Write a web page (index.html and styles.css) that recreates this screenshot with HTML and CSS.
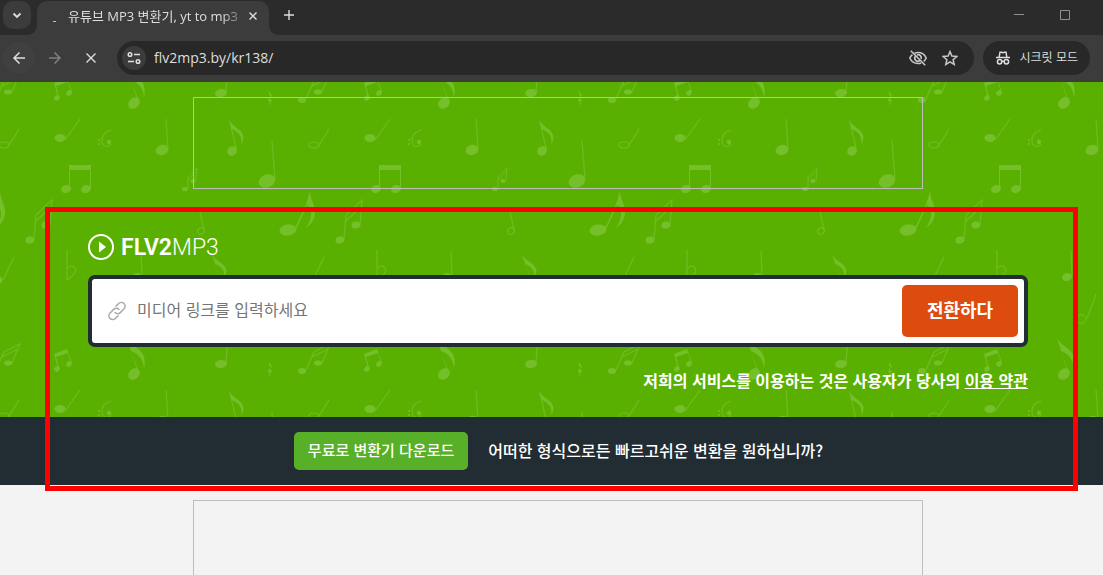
FILE: index.html
```html
<!DOCTYPE html>
<html lang="ko">
<head>
    <meta charset="UTF-8">
    <meta name="viewport" content="width=device-width, initial-scale=1.0">
    <title>유튜브 MP3 변환기, yt to mp3</title>
    <link rel="stylesheet" href="styles.css">
</head>
<body>
    <header class="browser">
        <div class="tab-strip">
            <button class="tab-search" aria-label="탭 검색">
                <svg width="16" height="16" viewBox="0 0 16 16"><path d="M4.5 6.5 8 10l3.5-3.5" stroke-width="1.8"/></svg>
            </button>
            <div class="tab">
                <svg class="spinner" width="16" height="16" viewBox="0 0 16 16"><path d="M8 13.5h3"/></svg>
                <span class="tab-title">유튜브 MP3 변환기, yt to mp3</span>
                <button class="tab-close" aria-label="탭 닫기">
                    <svg width="16" height="16" viewBox="0 0 16 16"><path d="m4.5 4.5 7 7m0-7-7 7" stroke-width="1.4"/></svg>
                </button>
            </div>
            <button class="new-tab" aria-label="새 탭">
                <svg width="16" height="16" viewBox="0 0 16 16"><path d="M8 3v10M3 8h10" stroke-width="1.4"/></svg>
            </button>
            <div class="window-buttons">
                <button aria-label="최소화"><svg width="12" height="12" viewBox="0 0 12 12"><path d="M1 5.5h10"/></svg></button>
                <button aria-label="최대화"><svg width="12" height="12" viewBox="0 0 12 12"><path d="M1.5 1.5h9v9h-9z"/></svg></button>
            </div>
        </div>
        <div class="toolbar">
            <button class="nav-btn nav-back" aria-label="뒤로">
                <svg width="16" height="16" viewBox="0 0 16 16"><path d="M14 8H3m5.5-5.5L3 8l5.5 5.5" stroke-width="1.5"/></svg>
            </button>
            <button class="nav-btn nav-forward" aria-label="앞으로">
                <svg width="16" height="16" viewBox="0 0 16 16"><path d="M2 8h11M7.5 2.5 13 8l-5.5 5.5" stroke-width="1.5"/></svg>
            </button>
            <button class="nav-btn" aria-label="중지">
                <svg width="16" height="16" viewBox="0 0 16 16"><path d="m3.5 3.5 9 9m0-9-9 9" stroke-width="1.4"/></svg>
            </button>
            <div class="address">
                <button class="site-info" aria-label="사이트 정보">
                    <svg width="16" height="16" viewBox="0 0 16 16"><g stroke-width="1.5"><circle cx="4" cy="4.5" r="1.8"/><path d="M8 4.5h6M2 11.5h6"/><circle cx="12" cy="11.5" r="1.8"/></g></svg>
                </button>
                <input class="url" type="text" value="flv2mp3.by/kr138/" aria-label="주소">
                <button class="icon-btn" aria-label="쿠키 차단됨">
                    <svg width="20" height="20" viewBox="0 0 20 20"><g stroke-width="1.6"><path d="M6.5 5.2A9 9 0 0 1 10 4.5c3.7 0 6.7 2.1 8.2 5.5a9 9 0 0 1-2.5 3.4M13.2 14.9a9 9 0 0 1-3.2.6c-3.7 0-6.7-2.1-8.2-5.5A9 9 0 0 1 4.4 6.6"/><path d="M9 6.9A3.2 3.2 0 0 1 13.1 11M11.6 12.8A3.2 3.2 0 0 1 7.2 8.4M2.8 2.8l14.4 14.4"/></g></svg>
                </button>
                <button class="icon-btn" aria-label="북마크">
                    <svg width="16" height="16" viewBox="0 0 16 16"><path d="m8 1.6 1.9 4.5 4.9.4-3.7 3.2 1.1 4.8L8 11.9l-4.2 2.6 1.1-4.8-3.7-3.2 4.9-.4z" stroke-width="1.5"/></svg>
                </button>
            </div>
            <button class="incognito">
                <svg width="16" height="16" viewBox="0 0 16 16"><g stroke-width="1.5"><path d="M1 7.5h14"/><path d="M4.2 7 5 2.2h1.5L8 2.8l1.5-.6H11l.8 4.8"/><circle cx="4.6" cy="11.8" r="2.2"/><circle cx="11.4" cy="11.8" r="2.2"/><path d="M6.8 11.3h2.4"/></g></svg>
                <span>시크릿 모드</span>
            </button>
        </div>
    </header>

    <main class="page">
        <section class="hero">
            <svg class="notes" width="100%" height="100%" aria-hidden="true">
                <defs>
                    <pattern id="notes" x="-32" y="30" width="310" height="271" patternUnits="userSpaceOnUse">
                        <g class="note">
                            <!-- first row -->
                            <g>
                                <ellipse class="line" cx="36" cy="33" rx="5" ry="3"/>
                                <path class="line" d="M40 34Q44 29 51 17"/>
                            </g>
                            <g>
                                <ellipse cx="92" cy="26" rx="5.5" ry="4"/>
                                <path class="line" d="M97 28Q102 21 112 7"/>
                            </g>
                            <g>
                                <path class="line" d="M143 18c-7 2-10 7-9 12 1 5 7 6 9 2"/>
                                <circle cx="141" cy="30" r="2.2"/>
                                <circle cx="131" cy="28" r="1"/><circle cx="131" cy="32" r="1"/>
                            </g>
                            <g>
                                <ellipse cx="194" cy="38" rx="6.5" ry="5" transform="rotate(-18 194 38)"/>
                                <path class="line" d="m198 7 2 30"/>
                            </g>
                            <g>
                                <ellipse cx="264" cy="39" rx="5" ry="4.5" transform="rotate(-35 264 39)"/>
                                <path d="M261 8c4 7 12 9 14 15 1 3 0 7-2 9 2-7-2-12-9-15l5 21h-1z"/>
                            </g>
                            <!-- second row -->
                            <g>
                                <ellipse cx="98" cy="77" rx="5" ry="4" transform="rotate(-18 98 77)"/>
                                <ellipse cx="118" cy="77" rx="5" ry="4" transform="rotate(-18 118 77)"/>
                                <path d="M101 53h22v24h-1V58h-20v19h-1z"/>
                            </g>
                            <g>
                                <ellipse cx="217" cy="77" rx="3" ry="2"/>
                                <ellipse cx="225" cy="69" rx="2.5" ry="2"/>
                                <path class="thin" d="M220 76V65l9-9-1 13m-8-1 9-9"/>
                            </g>
                            <g>
                                <ellipse cx="299" cy="69" rx="8.5" ry="6.5" transform="rotate(-22 299 69)"/>
                                <path class="line" d="m304 29 3 38"/>
                            </g>
                            <g>
                                <ellipse cx="10" cy="118" rx="8.5" ry="5.5" transform="rotate(-8 10 118)"/>
                                <path d="M32 79c0 9 6 14 5 23-1 7-5 11-9 14 5-8 7-15 3-21l-2-2c-3 8-7 16-11 24l-1-1c6-12 12-24 15-37z"/>
                            </g>
                            <!-- third row -->
                            <g>
                                <ellipse cx="62" cy="128" rx="4.5" ry="3.5" transform="rotate(-12 62 128)"/>
                                <ellipse cx="78" cy="113" rx="4.5" ry="3.5" transform="rotate(-12 78 113)"/>
                                <path class="line" d="m66 127 2-24 16-15-2 24M68 109l16-15"/>
                            </g>
                            <g>
                                <ellipse class="line" cx="233" cy="119" rx="3.5" ry="3" transform="rotate(-30 233 119)"/>
                                <path class="line" d="m232 100 4 18"/>
                            </g>
                            <g>
                                <path class="line" d="M99 138v30c7-4 10-9 8-12s-5-3-8 1"/>
                            </g>
                            <g>
                                <ellipse cx="169" cy="165" rx="5" ry="4" transform="rotate(-18 169 165)"/>
                                <path class="line" d="m173 139 1 25"/>
                            </g>
                            <g>
                                <ellipse cx="254" cy="171" rx="4" ry="3.5"/>
                                <path d="M244 143c4 6 12 8 14 14 1 2 0 5-2 8 1-7-3-11-9-13l8 18h-1z"/>
                            </g>
                            <g>
                                <ellipse cx="30" cy="168" rx="4.5" ry="3.5"/>
                                <path class="line" d="m35 168 11-23"/>
                            </g>
                            <g>
                                <ellipse class="line" cx="183" cy="207" rx="5" ry="4" transform="rotate(-8 183 207)"/>
                                <path class="line" d="M189 206q4-9 9-24"/>
                            </g>
                            <!-- fourth row -->
                            <g>
                                <ellipse cx="24" cy="259" rx="4" ry="3"/>
                                <ellipse cx="40" cy="251" rx="4" ry="2.5"/>
                                <path class="line" d="m28 258 8-18 16-8-8 19M34 245l16-8"/>
                            </g>
                            <g>
                                <ellipse cx="89" cy="257" rx="3" ry="2.5" transform="rotate(-45 89 257)"/>
                                <ellipse cx="101" cy="252" rx="3" ry="2.5" transform="rotate(-45 101 252)"/>
                                <path d="m86 242 13-5 5 14h-1l-3-10-12 4 3 11h-1z"/>
                            </g>
                            <g>
                                <ellipse cx="166" cy="262" rx="6.5" ry="5" transform="rotate(-45 166 262)"/>
                                <path d="M159 226c4 8 15 11 17 19 1 5 1 8 0 11-1-9-5-14-13-17l8 22h-1z"/>
                            </g>
                            <g>
                                <ellipse cx="253" cy="252" rx="6" ry="4" transform="rotate(-8 253 252)"/>
                                <path class="line" d="m260 222-2 29"/>
                            </g>
                            <g>
                                <path d="m301 250 3 5-2 2 2 3-2 1 1 3-2-1 1-2-2-1 1-3 2-1-2-3z"/>
                            </g>
                        </g>
                    </pattern>
                </defs>
                <rect width="100%" height="100%" fill="url(#notes)"/>
            </svg>

            <div class="ad"></div>
            <div class="converter">
                <a class="logo" href="/">
                    <svg width="26" height="26" viewBox="0 0 26 26"><circle cx="13" cy="13" r="12" fill="none" stroke="#fff" stroke-width="2"/><path d="m11 7.5 7 5.5-7 5.5z" fill="#fff"/></svg>
                    <span><b>FLV2</b>MP3</span>
                </a>
                <form class="link-form">
                    <svg class="link-icon" width="20" height="20" viewBox="0 0 20 20"><path d="M8.5 5.5 11.6 2.6a3.7 3.7 0 0 1 5.5 5.2l-3.8 3.8a3.7 3.7 0 0 1-5.3 0L7.6 11.1M11.5 14.5 8.4 17.4a3.7 3.7 0 0 1-5.5-5.2L6.7 8.4a3.7 3.7 0 0 1 5.3 0l.4.5"/></svg>
                    <input type="text" placeholder="미디어 링크를 입력하세요" aria-label="미디어 링크">
                    <button type="submit">전환하다</button>
                </form>
                <p class="terms">저희의 서비스를 이용하는 것은 사용자가 당사의 <a href="#">이용 약관</a></p>
            </div>
        </section>

        <section class="download">
            <a class="download-btn" href="#">무료로 변환기 다운로드</a>
            <p>어떠한 형식으로든 빠르고쉬운 변환을 원하십니까?</p>
        </section>

        <section class="content">
            <div class="ad ad-large"></div>
        </section>

        <div class="highlight"></div>
    </main>
</body>
</html>
```
FILE: styles.css
```css
* {
    box-sizing: border-box;
}
body {
    margin: 0;
    min-height: 100vh;
    display: flex;
    flex-direction: column;
    background: #f3f3f3;
    font-family: "Noto Sans CJK KR", sans-serif;
    font-size: 16px;
}
button {
    border: 0;
    padding: 0;
    background: none;
    color: inherit;
    font-family: inherit;
    cursor: pointer;
}
p { margin: 0; }

/* Browser window */
.browser {
    flex: none;
    background: #2b2b2b;
    color: #dedede;
    font-size: 12px;
}
.browser button {
    display: flex;
    align-items: center;
    justify-content: center;
}
.browser svg {
    fill: none;
    stroke: currentColor;
}
.tab-strip {
    display: flex;
    height: 35px;
    padding-left: 3px;
}
.browser .tab-search {
    width: 28px;
    height: 28px;
    margin-top: 1px;
    border-radius: 10px;
    background: #3c3c3c;
}
.tab {
    position: relative;
    display: flex;
    align-items: center;
    width: 232px;
    margin: 1px 0 0 6px;
    padding: 0 8px 5px;
    border-radius: 10px 10px 0 0;
    background: #3c3c3c;
}
.tab::before,
.tab::after {
    content: "";
    position: absolute;
    bottom: 0;
    width: 10px;
    height: 10px;
}
.tab::before {
    right: 100%;
    background: radial-gradient(circle at 0 0, transparent 10px, #3c3c3c 10px);
}
.tab::after {
    left: 100%;
    background: radial-gradient(circle at 100% 0, transparent 10px, #3c3c3c 10px);
}
.spinner {
    flex: none;
    color: #a8c7fa;
}
.tab-title {
    flex: 1;
    min-width: 0;
    margin-left: 7px;
    overflow: hidden;
    white-space: nowrap;
    font-family: "Open Sans", "Noto Sans CJK KR", sans-serif;
    font-size: 13px;
    line-height: 20px;
    mask-image: linear-gradient(to right, #000 88%, rgba(0, 0, 0, 0.2));
}
.tab-close {
    flex: none;
    width: 16px;
    margin-left: 2px;
}
.new-tab {
    width: 28px;
    height: 28px;
    margin: 1px 0 0 6px;
}
.window-buttons {
    display: flex;
    gap: 34px;
    margin: 9px 32px 0 auto;
    height: 12px;
    color: #8f8f8f;
}
.toolbar {
    display: flex;
    align-items: center;
    height: 47px;
    padding: 0 13px 1px 3px;
    background: #3c3c3c;
}
.nav-btn {
    width: 32px;
    height: 32px;
    margin-right: 4px;
    border-radius: 50%;
}
.browser .nav-back { background: #404040; }
.browser .nav-forward { color: #7f7f7f; }
.address {
    flex: 1;
    display: flex;
    align-items: center;
    gap: 14px;
    height: 34px;
    margin: 0 9px 0 6px;
    padding: 0 16px 0 5px;
    border-radius: 17px;
    background: #282828;
}
.browser .site-info {
    width: 24px;
    height: 24px;
    border-radius: 50%;
    background: #3c3c3c;
}
.url {
    flex: 1;
    min-width: 0;
    margin-left: -6px;
    padding: 0 0 2px;
    border: 0;
    outline: 0;
    background: none;
    color: #dedede;
    font: 14px "Open Sans", sans-serif;
}
.browser .icon-btn { color: #c7c7c7; }
.browser .incognito {
    gap: 8px;
    height: 34px;
    padding: 0 12px;
    border-radius: 17px;
    background: #282828;
    font-size: 12px;
    line-height: 18px;
}
.incognito span { padding-bottom: 2px; }

/* Page */
.page {
    position: relative;
    flex: 1;
    display: flex;
    flex-direction: column;
}
.hero {
    position: relative;
    padding: 15px 0 24px 13px;
    background: #5ab000;
}
.notes {
    position: absolute;
    inset: 0;
}
.note { fill: #74bf2a; }
.note .line,
.note .thin {
    fill: none;
    stroke: #6fbb22;
    stroke-width: 1.2;
}
.note .thin { stroke-width: 1; }
.ad {
    position: relative;
    width: 100%;
    max-width: 730px;
    height: 92px;
    margin: 0 auto;
    border: 1px solid #bdbdbd;
}
.converter {
    position: relative;
    max-width: 940px;
    margin: 0 auto;
    padding-top: 44px;
    color: #fff;
}
.logo {
    display: flex;
    align-items: center;
    gap: 7px;
    height: 28px;
    color: #fff;
    font-family: Roboto, sans-serif;
    font-size: 23px;
    font-weight: 300;
    text-decoration: none;
}
.logo b { font-weight: 600; }
.link-form {
    display: flex;
    align-items: center;
    height: 72px;
    margin-top: 14px;
    padding: 0 6px 0 15px;
    border: 4px solid #222c33;
    border-radius: 7px;
    background: #fff;
}
.link-icon {
    fill: none;
    stroke: #aaa;
    stroke-width: 1.5;
}
.link-form input {
    flex: 1;
    min-width: 0;
    height: 52px;
    padding: 0 10px 4px;
    border: 0;
    outline: 0;
    background: none;
    font: 16px "Noto Sans CJK KR", sans-serif;
}
.link-form input::placeholder { color: #757575; }
.link-form button {
    width: 116px;
    height: 52px;
    padding-bottom: 4px;
    border-radius: 5px;
    background: #dd4b0f;
    color: #fff;
    font-size: 18px;
    font-weight: 700;
}
.terms {
    margin-top: 20px;
    font-weight: 700;
    line-height: 26px;
    text-align: right;
}
.terms a { color: #fff; }
.download {
    display: flex;
    align-items: center;
    justify-content: center;
    gap: 20px;
    height: 68px;
    padding-left: 14px;
    background: #222c33;
    color: #fff;
    font-weight: 500;
}
.download p { padding-bottom: 2px; }
.download-btn {
    padding: 0 14px 2px;
    border-radius: 5px;
    background: #58b028;
    color: #fff;
    font-size: 15px;
    line-height: 36px;
    text-decoration: none;
}
.content {
    flex: 1;
    display: flex;
    padding: 15px 0 0 13px;
}
.ad-large {
    height: auto;
    border-bottom: 0;
}
.highlight {
    position: absolute;
    top: 125px;
    left: 45px;
    right: 25px;
    height: 284px;
    border: 5px solid #f00;
    pointer-events: none;
}
```
